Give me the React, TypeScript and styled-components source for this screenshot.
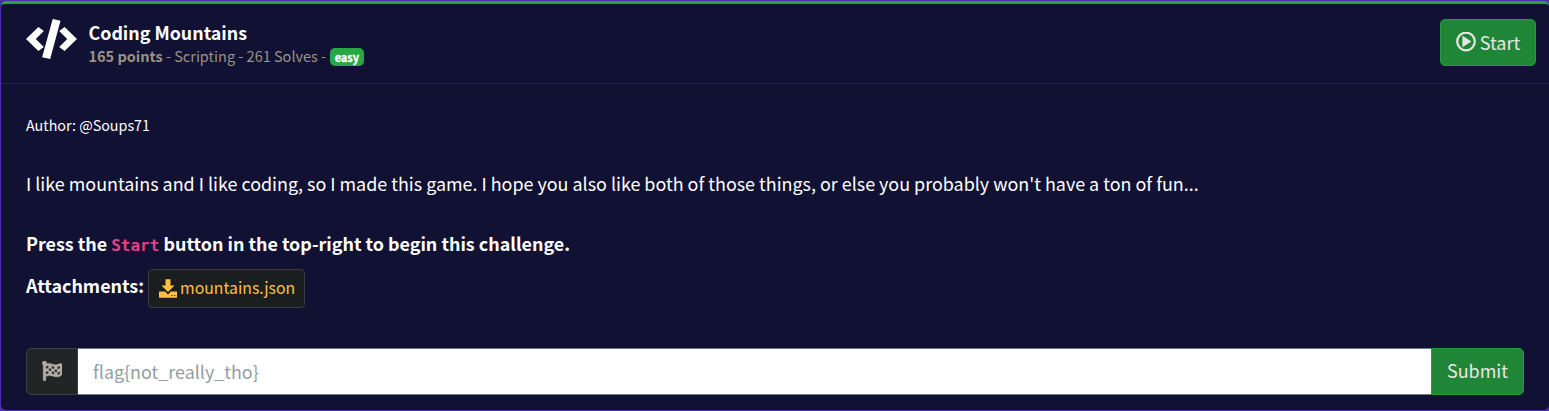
import React from 'react';
import styled, { createGlobalStyle } from 'styled-components';
import { FaFlagCheckered } from 'react-icons/fa';

const GlobalStyle = createGlobalStyle`
  *, *::before, *::after { box-sizing: border-box; }
  body {
    margin: 0;
    background: #4f2cb0;
    color: #fff;
    font-family: "Noto Sans CJK SC", "Noto Sans", sans-serif;
    font-size: 17.91px;
    line-height: 30px;
  }
  button, input { font-family: inherit; }
`;

const Page = styled.main`
  height: 411px;
  padding: 1px 0 1px 1px;
`;

const Card = styled.article`
  height: 100%;
  background: #111133;
  border-top: 3px solid #28a03f;
  border-radius: 5px;
  overflow: hidden;
`;

const Header = styled.header`
  display: flex;
  align-items: flex-start;
  height: 80px;
  padding: 15px 13px 0 25px;
  border-bottom: 1px solid #23234a;
`;

const Icon = styled.svg`
  display: block;
  flex: none;
  fill: currentColor;
`;

const Heading = styled.div`
  flex: 1;
  padding-left: 11.5px;
`;

const Title = styled.h1`
  margin: 0;
  font-size: 17.85px;
  font-weight: 700;
  line-height: 26px;
`;

const Meta = styled.div`
  display: flex;
  align-items: center;
  gap: 4px;
  color: #9b9384;
  font-size: 14.5px;
  line-height: 22px;
`;

const Badge = styled.span`
  height: 18px;
  margin-top: 2px;
  padding: 0 4.5px;
  border-radius: 5px;
  background: #28a745;
  color: #fff;
  font-size: 11px;
  font-weight: 700;
  line-height: 18px;
  -webkit-text-stroke: 0.3px #fff;
`;

const Button = styled.button<{ $joined?: boolean }>`
  display: flex;
  align-items: center;
  justify-content: center;
  gap: 4px;
  flex: none;
  width: ${({ $joined }) => ($joined ? 93 : 96)}px;
  height: 47px;
  padding: 0 0 ${({ $joined }) => ($joined ? 3 : 2)}px;
  border: 1px solid #259b40;
  border-radius: ${({ $joined }) => ($joined ? '0 5px 5px 0' : '5px')};
  background: #208637;
  color: #e8e6e3;
  font-size: 18px;
  line-height: 28px;
`;

const Body = styled.section`
  padding: 26px 25px 0;
`;

const Author = styled.p`
  margin: 0;
  font-size: 14.3px;
`;

const Paragraph = styled.p<{ $strong?: boolean }>`
  height: 30px;
  margin: ${({ $strong }) => ($strong ? 30 : 28)}px 0 0;
  font-weight: ${({ $strong }) => ($strong ? 700 : 400)};
`;

const Code = styled.code`
  color: #e83e8c;
  font-family: "DejaVu Sans Mono", monospace;
  font-size: 16px;
  line-height: 1;
`;

const Attachments = styled.div`
  display: flex;
  align-items: flex-start;
  gap: 4px;
  margin-top: 11px;
  font-weight: 700;
`;

const AttachmentsLabel = styled.span`
  padding-top: 1px;
`;

const FileLink = styled.a`
  display: flex;
  align-items: center;
  gap: 3px;
  height: 39px;
  padding: 0 9px 1px 10px;
  border: 1px solid #3a3d3c;
  border-radius: 4px;
  background: #1b1e1f;
  color: #ffc041;
  font-size: 15.8px;
  font-weight: 400;
`;

const FlagForm = styled.form`
  display: flex;
  height: 47px;
  margin-top: 40px;
`;

const FlagIcon = styled.span`
  display: flex;
  align-items: center;
  justify-content: center;
  width: 52px;
  padding-bottom: 2px;
  border: 1px solid #3a4043;
  border-radius: 5px 0 0 5px;
  background: #222526;
  color: #b5aea5;
`;

const FlagInput = styled.input`
  flex: 1;
  min-width: 0;
  padding: 0 15px 1px;
  border: 1px solid #737b80;
  border-width: 1px 0;
  border-radius: 0;
  background: #fff;
  font-size: 17.9px;
  &::placeholder { color: #959da2; opacity: 1; }
`;

const CodeIcon = () => (
  <Icon width="51" height="40" viewBox="0 0 51 40">
    <path d="M0 20 12.4 7.900 17.800 12 9.800 20 17.800 28 12.400 32.100ZM51 20 38.600 7.900 33.200 12 41.200 20 33.200 28 38.600 32.100ZM26.700 0 34.500 1.800 24.200 40 16.100 38.200Z" />
  </Icon>
);

const PlayIcon = () => (
  <Icon width="20" height="20" viewBox="0 0 20 20">
    <circle cx="10" cy="9.500" r="8.800" fill="none" stroke="currentColor" strokeWidth="2.2" overflow="visible" />
    <path d="M6.400 3.800 15.400 9.500 6.400 15.200Z" />
  </Icon>
);

const DownloadIcon = () => (
  <Icon width="18" height="19" viewBox="0 0 18 19">
    <path d="M6.500.300h5v6.200h4L9 13 2.500 6.500h4ZM0 12.500h6L9 15.500l3-3h6V18.700H0ZM12.300 16v1h1.200v-1ZM15 16v1h1.200v-1Z" fillRule="evenodd" />
  </Icon>
);

export default function App() {
  return (
    <Page>
      <GlobalStyle />
      <Card>
        <Header>
          <CodeIcon />
          <Heading>
            <Title>Coding Mountains</Title>
            <Meta>
              <span><b>165 points</b> - Scripting - 261 Solves -</span>
              <Badge>easy</Badge>
            </Meta>
          </Heading>
          <Button type="button"><PlayIcon />Start</Button>
        </Header>
        <Body>
          <Author>Author: @Soups71</Author>
          <Paragraph>
            I like mountains and I like coding, so I made this game. I hope you also like both of those things, or else you probably won't have a ton of fun...
          </Paragraph>
          <Paragraph $strong>
            Press the <Code>Start</Code> button in the top-right to begin this challenge.
          </Paragraph>
          <Attachments>
            <AttachmentsLabel>Attachments:</AttachmentsLabel>
            <FileLink><DownloadIcon />mountains.json</FileLink>
          </Attachments>
          <FlagForm>
            <FlagIcon><FaFlagCheckered size={20} stroke="currentColor" strokeWidth={14} /></FlagIcon>
            <FlagInput placeholder="flag{not_really_tho}" />
            <Button type="button" $joined>Submit</Button>
          </FlagForm>
        </Body>
      </Card>
    </Page>
  );
}
